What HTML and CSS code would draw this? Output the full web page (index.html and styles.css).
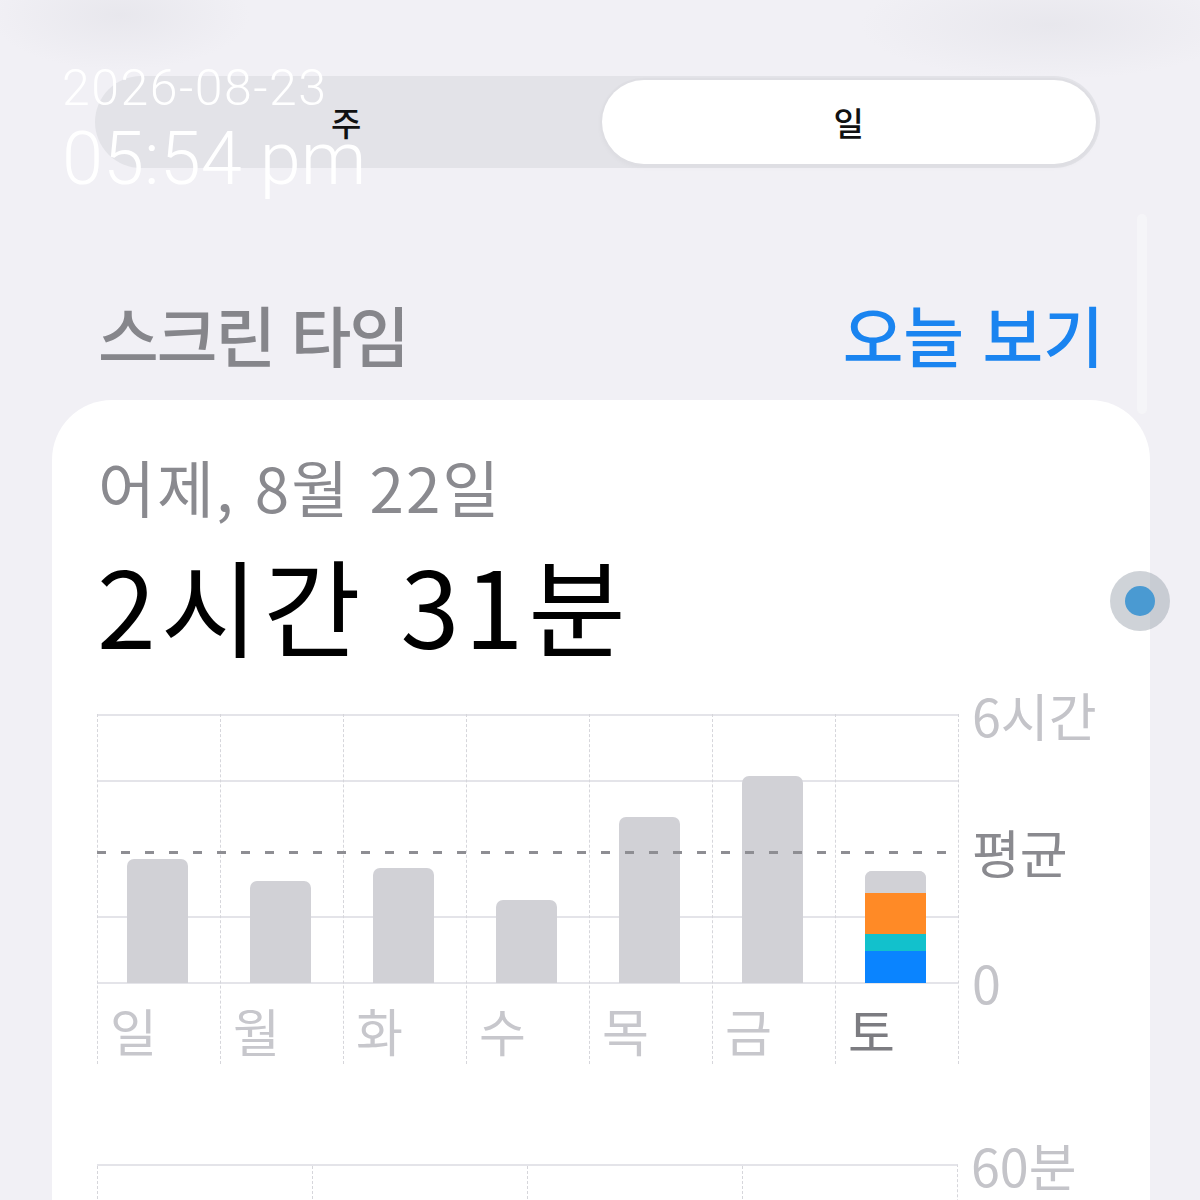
FILE: index.html
```html
<!DOCTYPE html>
<html lang="ko">
<head>
  <meta charset="UTF-8" />
  <title>스크린 타임</title>
  <meta name="viewport" content="width=device-width, initial-scale=1" />
  <link rel="stylesheet" href="styles.css">
</head>
<body>

  <div class="scroll-track"></div>

  <main class="screen">
    <div class="segmented" role="tablist">
      <span class="seg">주</span>
      <span class="seg seg-active">일</span>
    </div>

    <div class="section-head">
      <h2>스크린 타임</h2>
      <a href="#">오늘 보기</a>
    </div>

    <section class="card">
      <p class="card-date">어제, 8월 22일</p>
      <p class="card-total">2시간 31분</p>

      <!-- 주간 그래프 -->
      <div class="chart">
        <div class="plot">
          <div class="avg-line"></div>
          <div class="day">
            <div class="bar-slot"><div class="bar" style="height:124px"></div></div>
            <span class="day-label">일</span>
          </div>
          <div class="day">
            <div class="bar-slot"><div class="bar" style="height:102px"></div></div>
            <span class="day-label">월</span>
          </div>
          <div class="day">
            <div class="bar-slot"><div class="bar" style="height:115px"></div></div>
            <span class="day-label">화</span>
          </div>
          <div class="day">
            <div class="bar-slot"><div class="bar" style="height:83px"></div></div>
            <span class="day-label">수</span>
          </div>
          <div class="day">
            <div class="bar-slot"><div class="bar" style="height:166px"></div></div>
            <span class="day-label">목</span>
          </div>
          <div class="day">
            <div class="bar-slot"><div class="bar" style="height:207px"></div></div>
            <span class="day-label">금</span>
          </div>
          <div class="day">
            <div class="bar-slot">
              <div class="bar bar-stack">
                <span class="seg-other" style="height:22px"></span>
                <span class="seg-orange" style="height:41px"></span>
                <span class="seg-teal" style="height:17px"></span>
                <span class="seg-blue" style="height:32px"></span>
              </div>
            </div>
            <span class="day-label today">토</span>
          </div>
        </div>
        <div class="axis">
          <span class="axis-top">6시간</span>
          <span class="axis-avg">평균</span>
          <span class="axis-zero">0</span>
        </div>
      </div>

      <!-- 시간대 그래프 -->
      <div class="chart chart-hours">
        <div class="plot-hours">
          <div class="hour"></div>
          <div class="hour"></div>
          <div class="hour"></div>
          <div class="hour"></div>
        </div>
        <div class="axis">
          <span class="axis-top">60분</span>
        </div>
      </div>
    </section>
  </main>

  <div class="stamp">
    <span class="stamp-date">2026-08-23</span>
    <span class="stamp-time">05:54 pm</span>
  </div>

  <div class="touch-button"><span></span></div>

</body>
</html>
```

FILE: styles.css
```css
/* Reset básico */
* {
  box-sizing: border-box;
  margin: 0;
  padding: 0;
  font-family: "Noto Sans CJK KR", "Noto Sans", sans-serif;
}

body {
  width: 1200px;
  height: 1200px;
  overflow: hidden;
  position: relative;
  background:
    radial-gradient(ellipse 130px 55px at 120px 15px, rgba(215, 215, 222, 0.35), transparent),
    radial-gradient(ellipse 190px 55px at 1050px 25px, rgba(215, 215, 222, 0.35), transparent),
    #f1f0f5;
  color: #000;
}

/* Contenido */
.screen {
  padding: 76px 0 0 52px;
}

/* Selector 주 / 일 */
.segmented {
  width: 1005px;
  margin-left: 43px;
  height: 92px;
  background: #e3e3e8;
  border-radius: 46px;
  display: grid;
  grid-template-columns: 1fr 1fr;
  gap: 8px;
  padding: 4px;
}
.seg {
  display: flex;
  align-items: center;
  justify-content: center;
  font-size: 33px;
  font-weight: 500;
  color: #111;
  border-radius: 42px;
}
.seg-active {
  background: #fff;
  box-shadow: 0 0 0 2px #dedee3, 0 2px 6px rgba(0, 0, 0, 0.05);
}

/* Encabezado */
.section-head {
  display: flex;
  justify-content: space-between;
  align-items: center;
  margin: 126px 96px 0 46px;
  height: 78px;
}
.section-head h2 {
  font-size: 66px;
  font-weight: 500;
  color: #86868b;
  letter-spacing: -2px;
}
.section-head a {
  font-size: 66px;
  font-weight: 500;
  color: #1a84f0;
  text-decoration: none;
  letter-spacing: 0;
}

/* Tarjeta */
.card {
  margin-top: 28px;
  width: 1098px;
  height: 900px;
  background: #fff;
  border-radius: 60px;
  padding: 50px 0 0 45px;
  position: relative;
}
.card-date {
  font-size: 62px;
  line-height: 72px;
  color: #8a8a8f;
  padding-left: 1px;
  letter-spacing: 2px;
}
.card-total {
  font-size: 106px;
  line-height: 114px;
  font-weight: 400;
  color: #000;
  letter-spacing: 5px;
  margin-top: 24px;
}

/* Gráfico semanal */
.chart {
  display: flex;
  margin-top: 54px;
}
.plot {
  position: relative;
  display: grid;
  grid-template-columns: repeat(7, 123px);
  background:
    linear-gradient(#e4e4e9, #e4e4e9) 0 0 / 100% 2px no-repeat,
    linear-gradient(#e4e4e9, #e4e4e9) 0 66px / 100% 2px no-repeat,
    linear-gradient(#e4e4e9, #e4e4e9) 0 202px / 100% 2px no-repeat,
    linear-gradient(#e4e4e9, #e4e4e9) 0 268px / 100% 2px no-repeat;
  border-right: 1px dashed #d6d6db;
}
.day {
  border-left: 1px dashed #d6d6db;
  display: flex;
  flex-direction: column;
}
.bar-slot {
  height: 269px;
  display: flex;
  align-items: flex-end;
  padding-left: 29px;
}
.bar {
  width: 61px;
  background: #d1d1d6;
  border-radius: 7px 7px 0 0;
}
.bar-stack {
  display: flex;
  flex-direction: column;
  overflow: hidden;
}
.seg-other { background: #d1d1d6; }
.seg-orange { background: #ff8a26; }
.seg-teal { background: #12c1cc; }
.seg-blue { background: #0a84ff; }

.day-label {
  height: 81px;
  padding: 18px 0 0 12px;
  font-size: 51px;
  line-height: 58px;
  color: #c7c7cc;
}
.day-label.today {
  color: #7c7c81;
}

/* Línea de promedio */
.avg-line {
  position: absolute;
  left: 0;
  right: 0;
  top: 137px;
  height: 3px;
  background: repeating-linear-gradient(90deg, #8e8e93 0 9px, transparent 9px 24px);
}

/* Eje */
.axis {
  display: flex;
  flex-direction: column;
  padding-left: 13px;
  font-size: 52px;
  line-height: 54px;
  color: #c4c4c9;
}
.axis-top { margin-top: -26px; }
.axis-avg { margin-top: 83px; color: #8a8a8f; }
.axis-zero { margin-top: 76px; }

/* Gráfico por horas */
.chart-hours {
  margin-top: 100px;
}
.plot-hours {
  display: grid;
  grid-template-columns: repeat(4, 215px);
  height: 200px;
  border-top: 2px solid #e4e4e9;
  border-right: 1px dashed #d6d6db;
  width: 861px;
}
.hour {
  border-left: 1px dashed #d6d6db;
}

/* Marca de fecha */
.stamp {
  position: absolute;
  left: 62px;
  top: 60px;
  display: flex;
  flex-direction: column;
  color: #fff;
}
.stamp span {
  font-family: Roboto, "Liberation Sans", sans-serif;
  font-weight: 300;
}
.stamp-date {
  font-size: 50px;
  line-height: 56px;
  letter-spacing: 1.5px;
}
.stamp-time {
  font-size: 74px;
  line-height: 82px;
  margin-top: 2px;
}

/* Barra de desplazamiento */
.scroll-track {
  position: absolute;
  left: 1137px;
  top: 214px;
  width: 10px;
  height: 200px;
  border-radius: 5px;
  background: #f5f5f8;
}

/* Botón flotante */
.touch-button {
  position: absolute;
  left: 1110px;
  top: 571px;
  width: 60px;
  height: 60px;
  border-radius: 50%;
  background: rgba(160, 168, 178, 0.5);
  display: flex;
  align-items: center;
  justify-content: center;
}
.touch-button span {
  width: 30px;
  height: 30px;
  border-radius: 50%;
  background: #4a9ad2;
}
```
